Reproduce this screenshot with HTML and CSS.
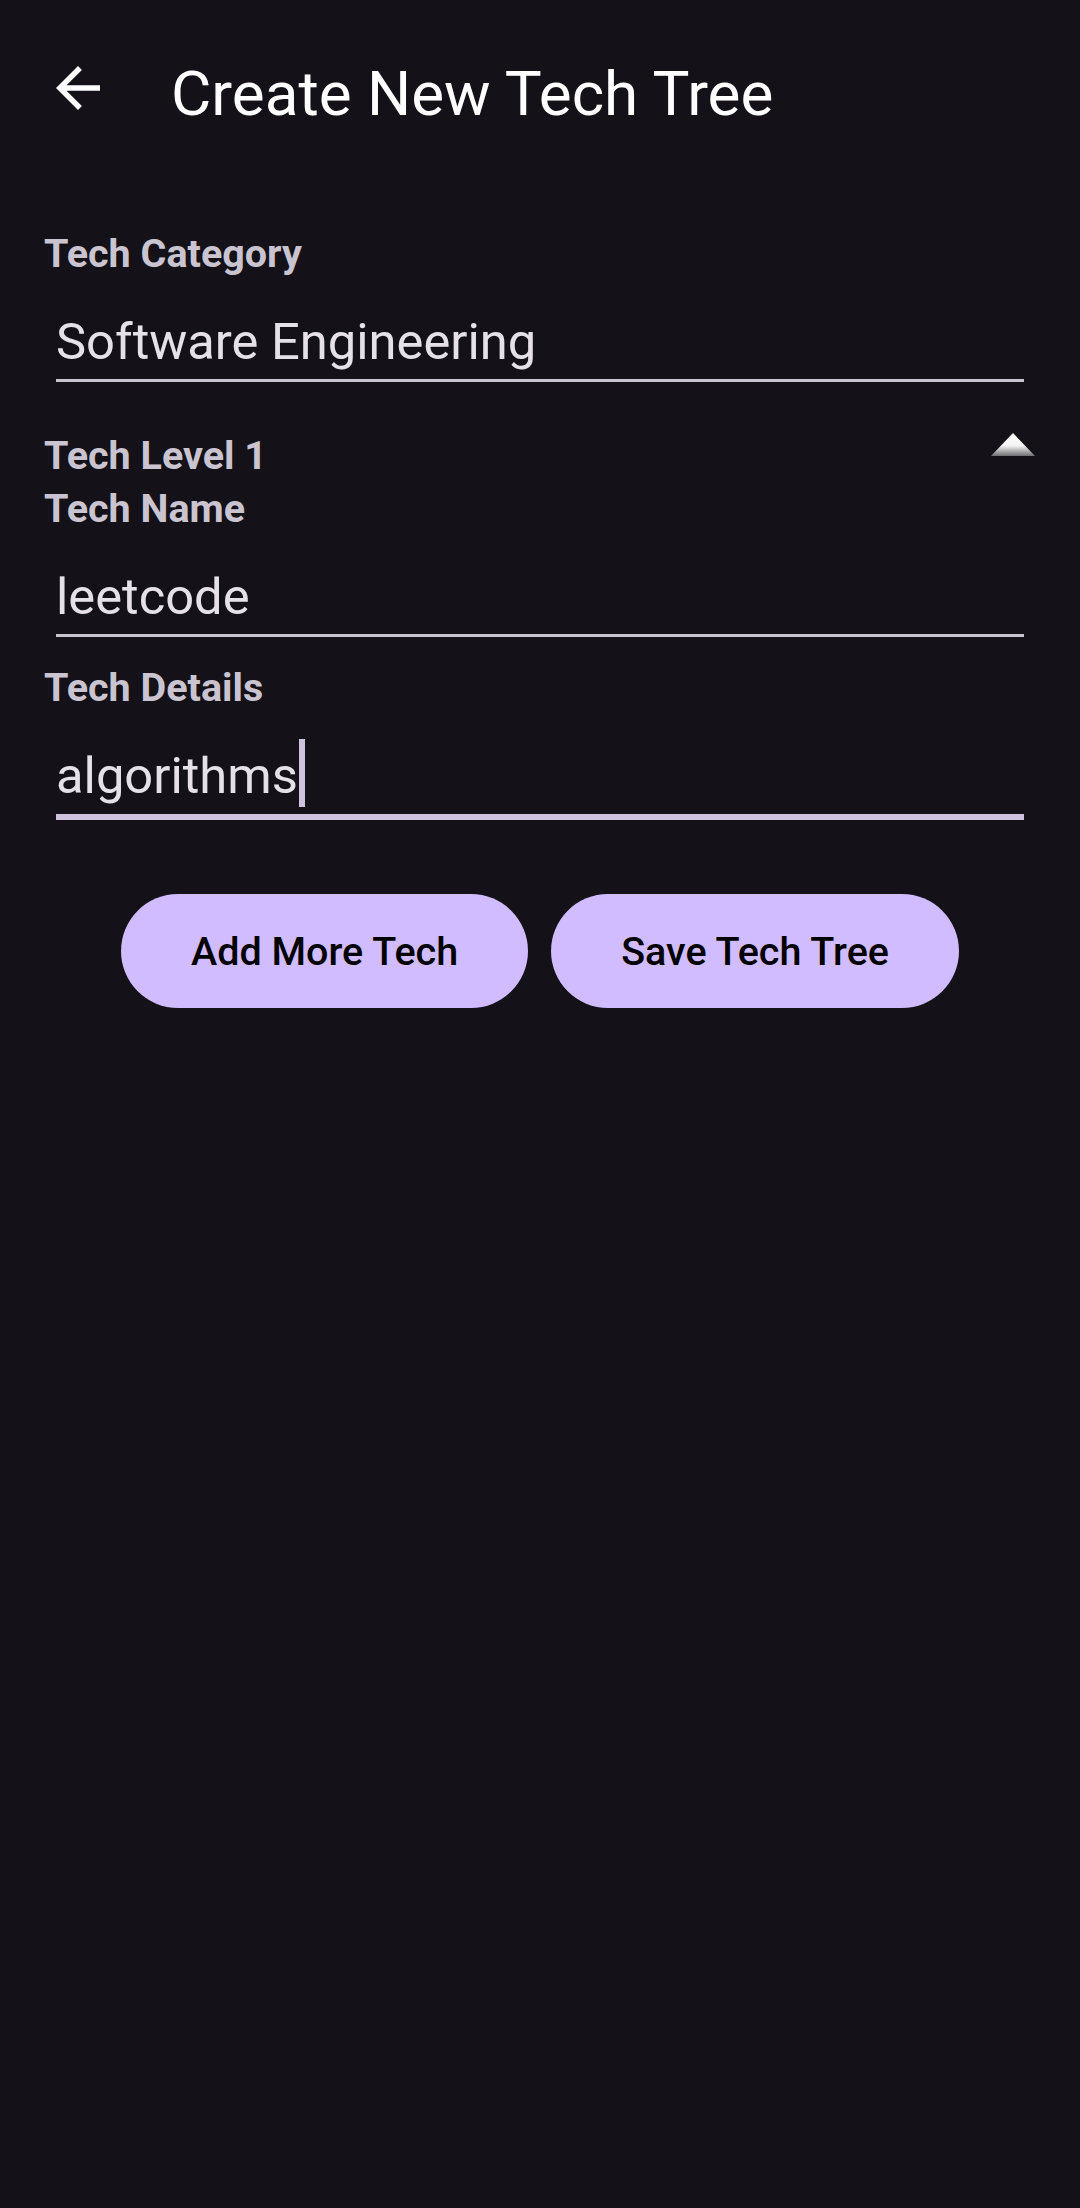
FILE: index.html
```html
<!DOCTYPE html>
<html lang="en">
<head>
<meta charset="utf-8">
<title>Create New Tech Tree</title>
<link rel="stylesheet" href="styles.css">
</head>
<body>
<div class="screen">
  <header class="appbar">
    <button class="nav-btn" aria-label="Back">
      <svg class="nav-icon" viewBox="0 0 24 24" width="66" height="66">
        <path fill="#ffffff" d="M20 11H7.83l5.59-5.59L12 4l-8 8 8 8 1.41-1.41L7.83 13H20v-2z"/>
      </svg>
    </button>
    <h1 class="title">Create New Tech Tree</h1>
  </header>

  <main class="content">
    <div class="label label-first">Tech Category</div>
    <div class="field">
      <div class="field-text">Software Engineering</div>
    </div>

    <div class="level-row">
      <div class="label">Tech Level 1</div>
      <svg class="collapse" viewBox="0 0 46 25" width="46" height="25">
        <defs>
          <linearGradient id="tri" x1="0" y1="0" x2="0" y2="1">
            <stop offset="0" stop-color="#ffffff"/>
            <stop offset="0.55" stop-color="#f4f4f4"/>
            <stop offset="1" stop-color="#6e6d72"/>
          </linearGradient>
        </defs>
        <polygon points="23,1 45,24 1,24" fill="url(#tri)"/>
      </svg>
    </div>
    <div class="label">Tech Name</div>
    <div class="field">
      <div class="field-text">leetcode</div>
    </div>

    <div class="label label-details">Tech Details</div>
    <div class="field field-focused">
      <div class="field-text">algorithms<span class="cursor"></span></div>
    </div>

    <div class="actions">
      <button class="btn">Add More Tech</button>
      <button class="btn">Save Tech Tree</button>
    </div>
  </main>
</div>
</body>
</html>
```

FILE: styles.css
```css
* {
  box-sizing: border-box;
}

html, body {
  margin: 0;
  padding: 0;
  background: #141218;
}

body {
  font-family: Roboto, "Noto Sans", "Liberation Sans", sans-serif;
  color: #e6e0e9;
}

.screen {
  width: 1080px;
  min-height: 2208px;
  background: #141218;
}

.appbar {
  height: 176px;
  display: flex;
  align-items: center;
}

.nav-btn {
  margin-left: 45px;
  padding: 0;
  border: 0;
  background: transparent;
  width: 66px;
  height: 66px;
  display: flex;
}

.nav-icon {
  display: block;
}

.title {
  margin: 11px 0 0 60px;
  font-size: 62px;
  line-height: 1;
  font-weight: 400;
  color: #ffffff;
  letter-spacing: 0;
}

.content {
  padding: 0 44px;
  display: flex;
  flex-direction: column;
}

.label {
  font-size: 39.5px;
  line-height: 53px;
  font-weight: 700;
  color: #cac4d0;
}

.label-first {
  margin-top: 51px;
}

.field {
  margin: 33px 12px 0;
  padding-bottom: 8px;
  border-bottom: 3px solid #cac4d0;
}

.field-text {
  font-size: 50.7px;
  line-height: 58px;
  color: #e6e0e9;
  display: flex;
  align-items: flex-start;
}

.field-focused {
  padding-bottom: 7px;
  border-bottom: 6px solid #cec2de;
}

.cursor {
  display: block;
  width: 6px;
  height: 68px;
  margin-top: -8px;
  margin-left: 1px;
  background: #cec2de;
}

.level-row {
  margin-top: 47px;
  display: flex;
  justify-content: space-between;
  align-items: flex-start;
}

.collapse {
  display: block;
  margin-top: 3px;
  margin-right: 0;
}

.label-details {
  margin-top: 24px;
}

.actions {
  margin-top: 74px;
  display: flex;
  justify-content: center;
  gap: 23px;
}

.btn {
  height: 114px;
  padding: 0 70px;
  border: 0;
  border-radius: 57px;
  background: #d0bcff;
  color: #000000;
  font-family: Roboto, "Noto Sans", "Liberation Sans", sans-serif;
  font-size: 39.5px;
  font-weight: 500;
}
```
